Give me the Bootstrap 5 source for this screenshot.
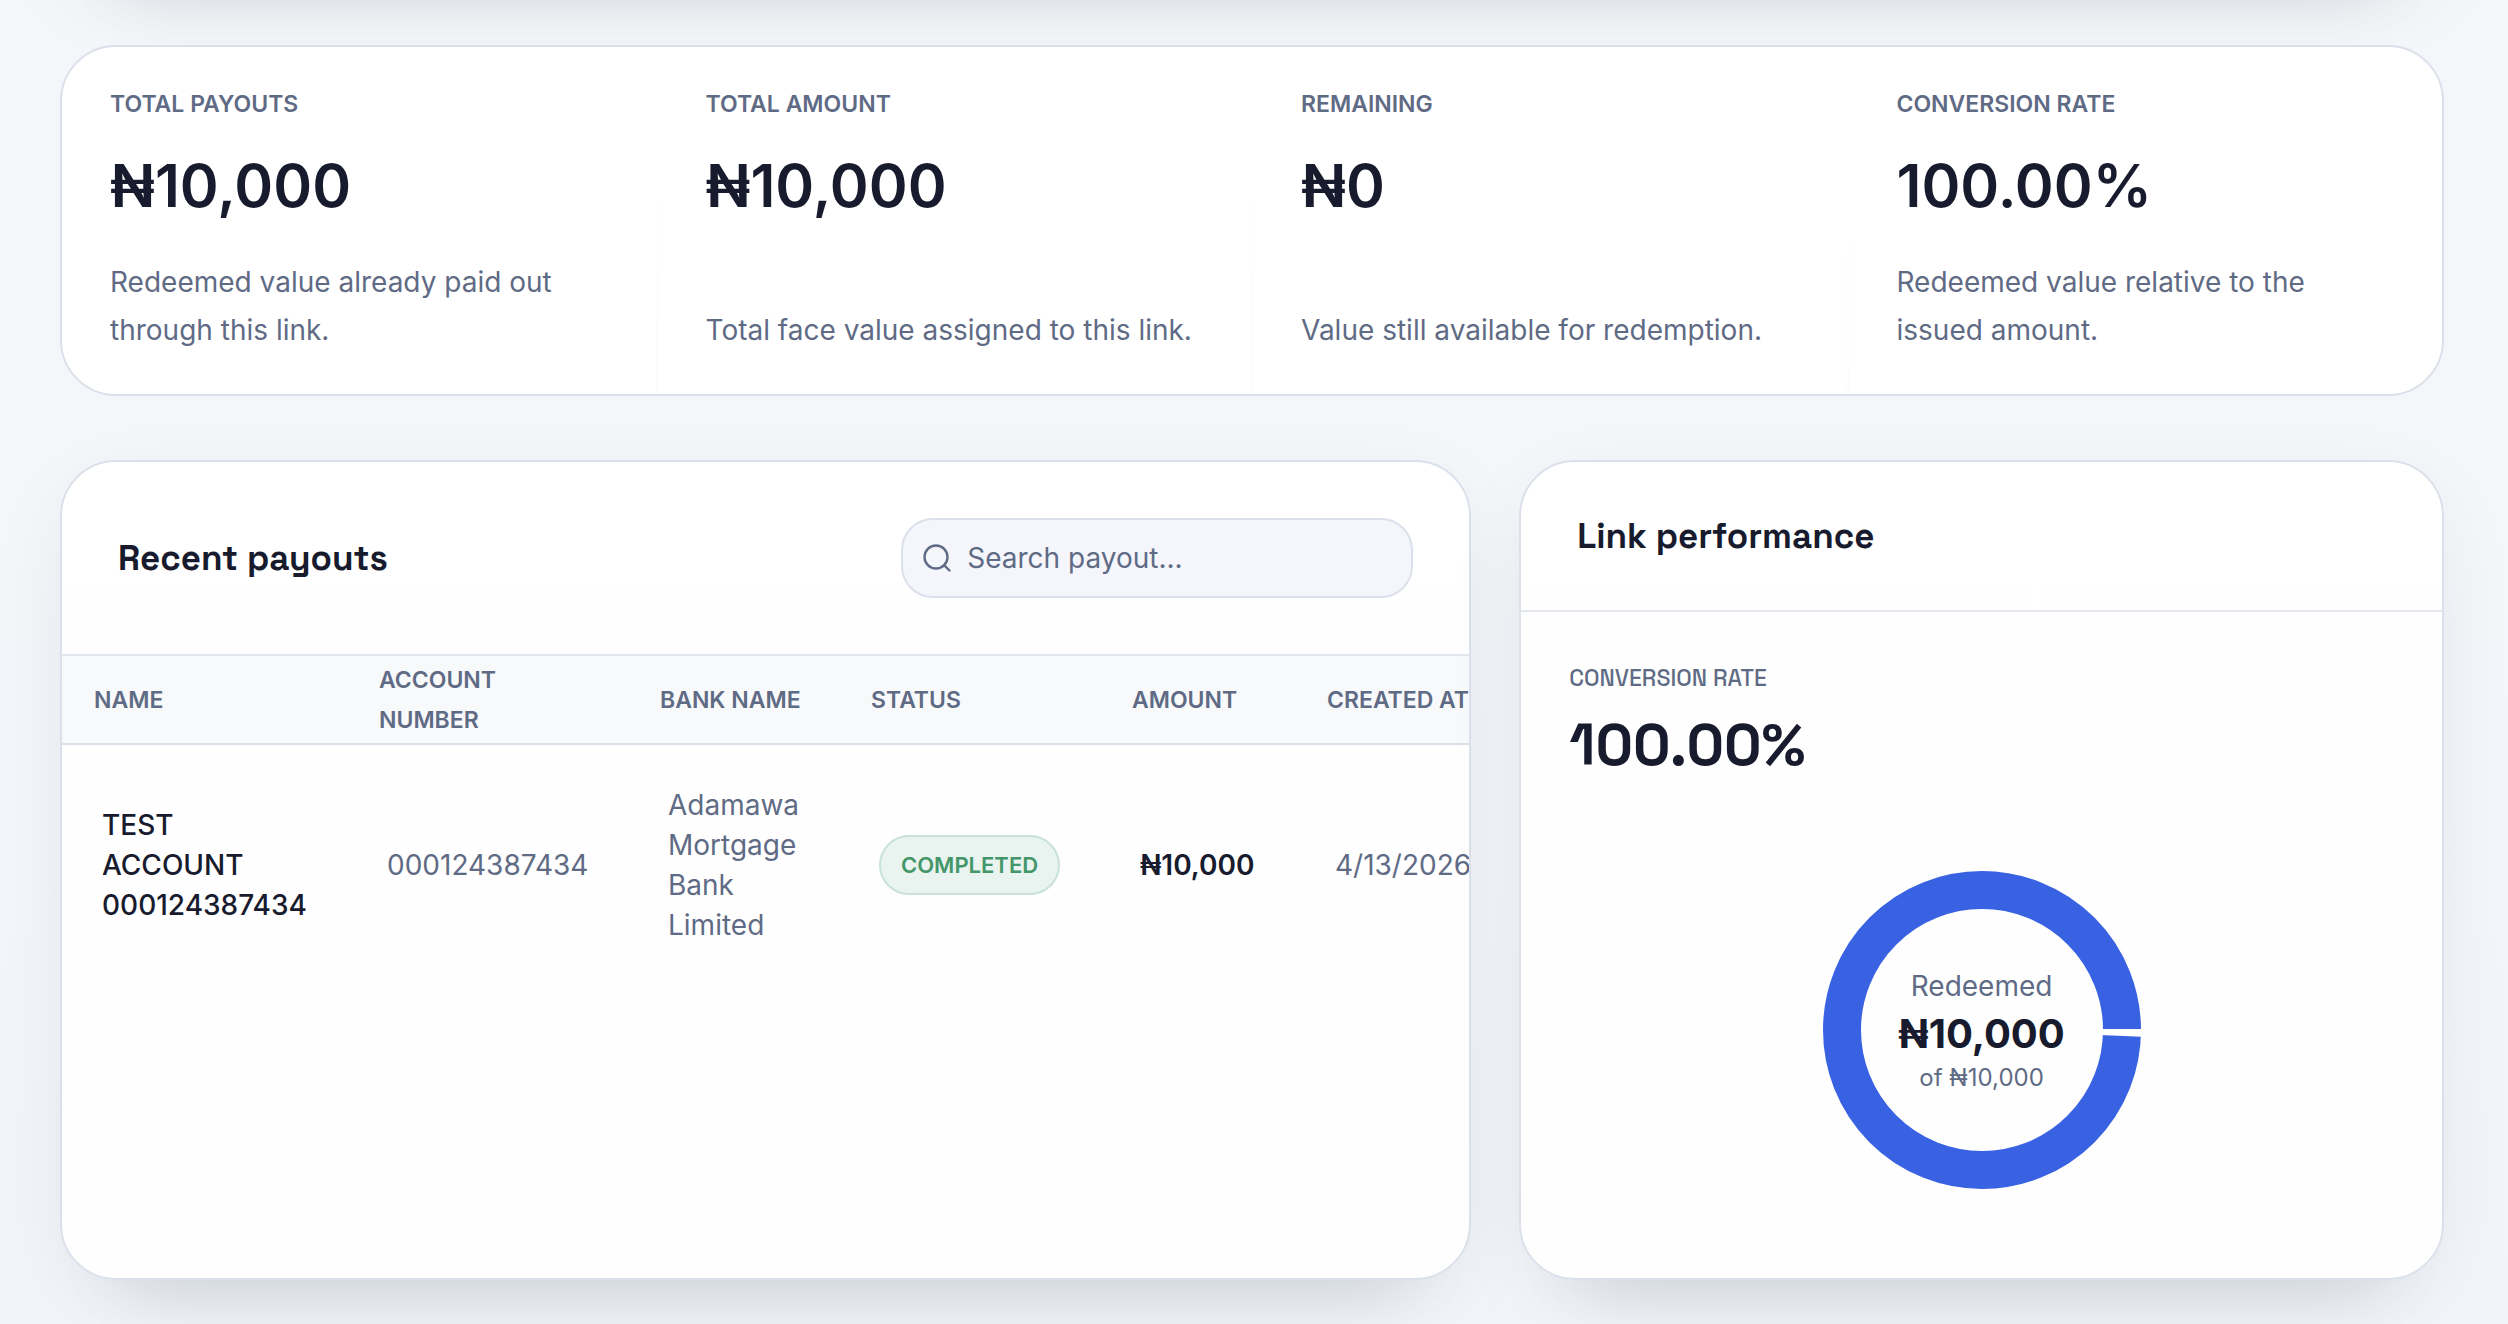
<!DOCTYPE html>
<html lang="en">
<head>
<meta charset="utf-8">
<meta name="viewport" content="width=device-width, initial-scale=1">
<title>Payout link overview</title>
<link href="https://cdn.jsdelivr.net/npm/bootstrap@5.3.0/dist/css/bootstrap.min.css" rel="stylesheet">
<style>
  :root { --ink: #171b2d; --muted: #5f6b85; --line: #dbe0eb; --soft-line: #e3e8ef; }
  body { font-family: Inter, "Liberation Sans", sans-serif; font-size: 28px; line-height: 40px; color: var(--muted); background: linear-gradient(#f4f6fa 0, #f4f6fa 460px, #f1f5f9 1324px); overflow-x: hidden; }
  .page { gap: 64px; padding: 0 64px 44px 60px; }
  .panel { border: 2px solid var(--line); border-radius: 56px; background: linear-gradient(#fff, #fefefe); overflow: hidden; }
  .raised { box-shadow: 0 24px 96px -24px rgba(15, 23, 42, .1), 0 68px 72px -68px rgba(15, 23, 42, .12); }
  .hero { height: 220px; margin-top: -239px; }
  .stats { position: relative; background: #fff; }
  .stat { padding: 40px 48px; }
  .stat + .stat { border-left: 2px solid; border-image: linear-gradient(#fff 30%, #fbfcfd) 1; }
  .eyebrow { font-size: 23px; line-height: 34px; font-weight: 600; text-transform: uppercase; margin: 0; }
  .figure-lg { font-size: 59px; line-height: 62px; font-weight: 600; color: var(--ink); margin: 34px 0 41px; }
  .note { line-height: 48px; }
  .split { gap: 48px; }
  .payouts { flex: 1412 1 0; min-width: 0; }
  .performance { flex: 924 1 0; min-width: 0; }
  .head { padding: 56px; border-bottom: 2px solid var(--soft-line); }
  .title { font-family: "Space Grotesk", Inter, sans-serif; font-size: 35px; line-height: 36px; font-weight: 600; color: var(--ink); margin: 0; }
  .search { width: 512px; height: 80px; border: 2px solid var(--line); border-radius: 32px; background: #f5f6fb; padding: 0 20px; gap: 16px; }
  .search input { border: 0; outline: 0; background: transparent; color: var(--ink); flex: 1; min-width: 0; padding: 0; }
  .search input::placeholder { color: var(--muted); opacity: 1; }
  .grid-table { table-layout: fixed; width: 1520px; border-collapse: separate; border-spacing: 0; }
  .grid-table th { height: 89px; padding: 0 32px; font-size: 23px; font-weight: 600; text-transform: uppercase; background: #f8f9fb; border-bottom: 2px solid var(--line); }
  .grid-table td { padding: 40px; vertical-align: middle; }
  .grid-table td.acct { padding-right: 0; }
  .c-name { width: 285px; } .c-acct { width: 281px; } .c-bank { width: 211px; } .c-status { width: 261px; } .c-amount { width: 195px; }
  .ink { color: var(--ink); }
  .state { display: inline-flex; align-items: center; height: 60px; padding: 0 20px; border: 2px solid #c8e2d5; border-radius: 30px; background: #e9f3ef; color: #43966a; font-size: 22px; font-weight: 600; vertical-align: middle; }
  .perf-body { padding: 48px; }
  .perf-label { font-family: "Space Grotesk", Inter, sans-serif; font-weight: 500; line-height: 36px; }
  .perf-value { font-family: "Space Grotesk", Inter, sans-serif; font-size: 58px; margin: 18px 0 54px; }
  .chart { height: 400px; display: grid; place-items: center; }
  .chart > * { grid-area: 1 / 1; }
  .chart-value { font-size: 40px; line-height: 56px; font-weight: 700; }
  .chart-total { font-size: 24px; line-height: 32px; }
</style>
<script src="https://cdn.jsdelivr.net/npm/bootstrap@5.3.0/dist/js/bootstrap.bundle.min.js"></script>
</head>
<body>
<main class="page d-flex flex-column">
  <div class="hero panel raised"></div>

  <section class="stats panel">
    <div class="row g-0">
      <div class="stat col d-flex flex-column">
        <p class="eyebrow">Total payouts</p>
        <p class="figure-lg">₦10,000</p>
        <p class="note mt-auto mb-0">Redeemed value already paid out through this link.</p>
      </div>
      <div class="stat col d-flex flex-column">
        <p class="eyebrow">Total amount</p>
        <p class="figure-lg">₦10,000</p>
        <p class="note mt-auto mb-0">Total face value assigned to this link.</p>
      </div>
      <div class="stat col d-flex flex-column">
        <p class="eyebrow">Remaining</p>
        <p class="figure-lg">₦0</p>
        <p class="note mt-auto mb-0">Value still available for redemption.</p>
      </div>
      <div class="stat col d-flex flex-column">
        <p class="eyebrow">Conversion rate</p>
        <p class="figure-lg">100.00%</p>
        <p class="note mt-auto mb-0">Redeemed value relative to the issued amount.</p>
      </div>
    </div>
  </section>

  <div class="split d-flex align-items-stretch">
    <section class="payouts panel raised">
      <div class="head d-flex align-items-center justify-content-between">
        <h2 class="title">Recent payouts</h2>
        <label class="search d-flex align-items-center">
          <svg width="28" height="28" viewBox="0 0 28 28" fill="none" stroke="#5f6b85" stroke-width="2.4" stroke-linecap="round" aria-hidden="true"><circle cx="13" cy="13" r="11.5"/><path d="M21.3 21.3 26.5 26.5"/></svg>
          <input type="search" placeholder="Search payout..." aria-label="Search payout">
        </label>
      </div>
      <table class="grid-table">
        <colgroup><col class="c-name"><col class="c-acct"><col class="c-bank"><col class="c-status"><col class="c-amount"><col></colgroup>
        <thead>
          <tr><th>Name</th><th>Account number</th><th class="text-nowrap">Bank name</th><th>Status</th><th>Amount</th><th>Created at</th></tr>
        </thead>
        <tbody>
          <tr>
            <td class="ink fw-medium">TEST ACCOUNT 000124387434</td>
            <td class="acct">000124387434</td>
            <td>Adamawa Mortgage Bank Limited</td>
            <td><span class="state">COMPLETED</span></td>
            <td class="ink fw-semibold">₦10,000</td>
            <td class="text-nowrap">4/13/2026</td>
          </tr>
        </tbody>
      </table>
    </section>

    <section class="performance panel raised">
      <div class="head"><h2 class="title">Link performance</h2></div>
      <div class="perf-body">
        <p class="eyebrow perf-label">Conversion rate</p>
        <p class="figure-lg perf-value">100.00%</p>
        <div class="chart">
          <svg width="318" height="318" viewBox="-159 -159 318 318" role="img" aria-label="Redeemed share">
            <circle r="140" fill="none" stroke="#3962e3" stroke-width="38"/>
            <path fill="#fff" d="M118-1H159V6.7L118 5Z"/>
          </svg>
          <div class="text-center">
            <div>Redeemed</div>
            <div class="ink chart-value">₦10,000</div>
            <div class="chart-total">of ₦10,000</div>
          </div>
        </div>
      </div>
    </section>
  </div>
</main>
</body>
</html>
